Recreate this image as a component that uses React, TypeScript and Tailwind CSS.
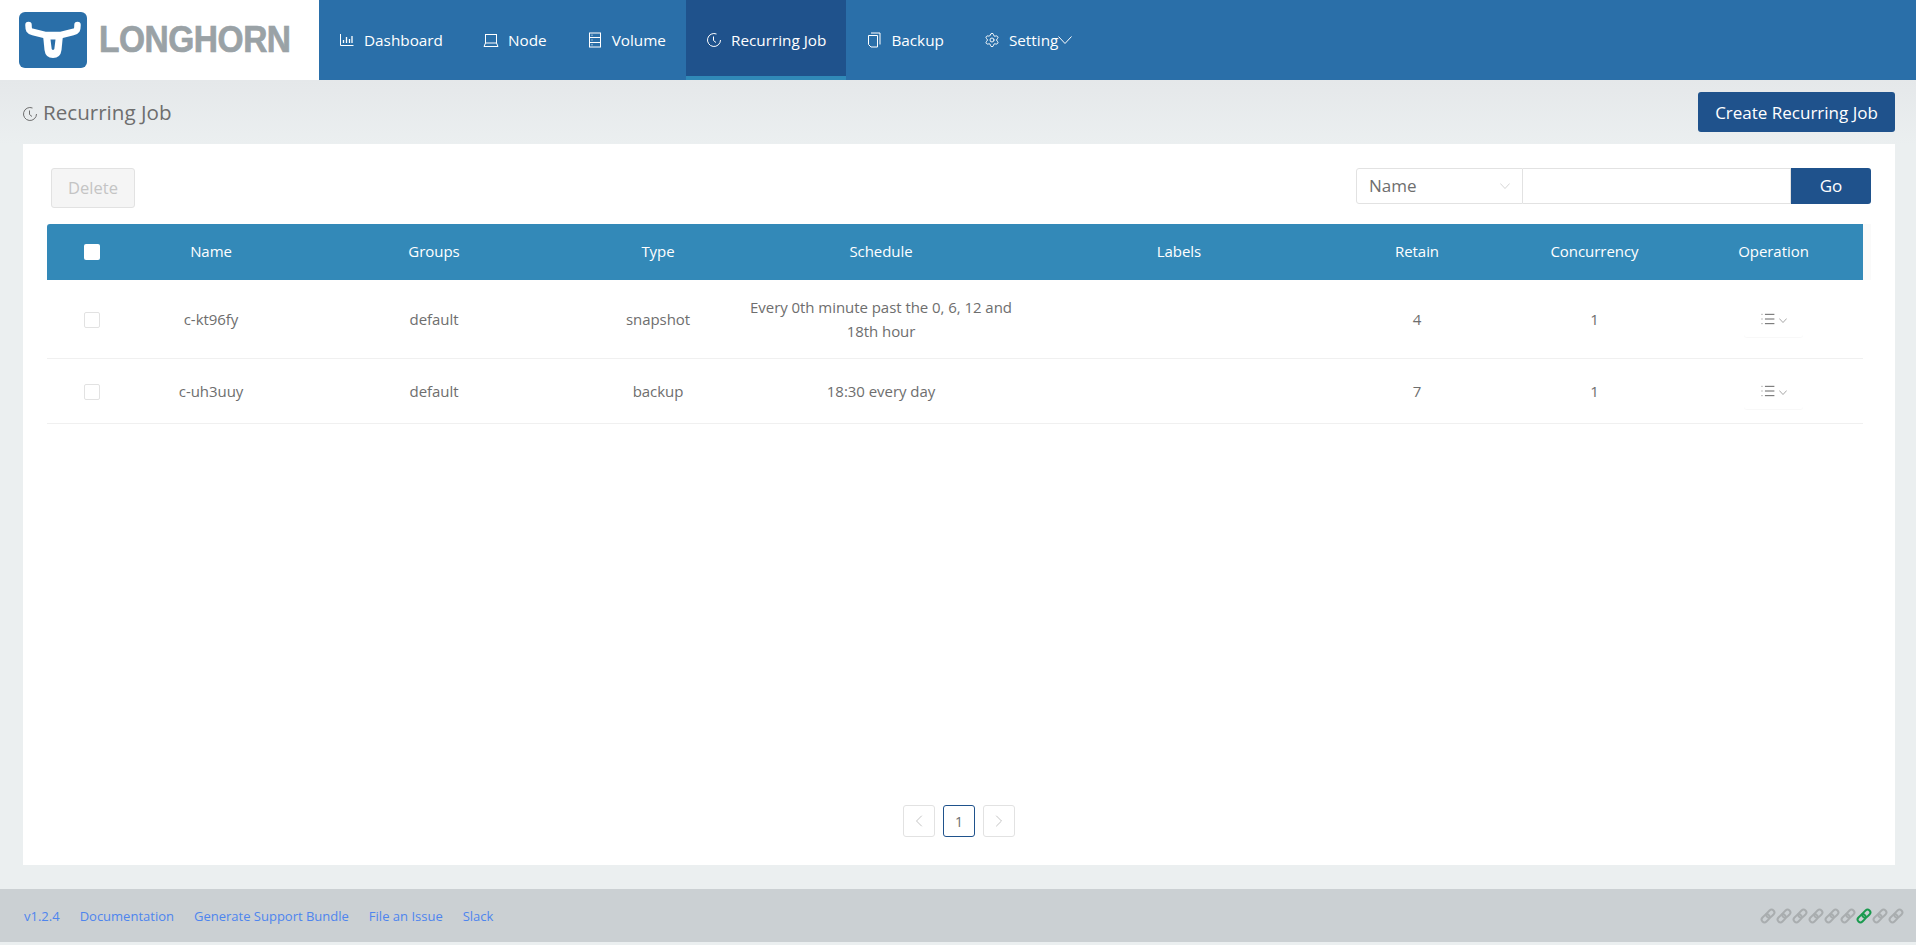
import React from 'react';
import { ChevronLeft, ChevronRight, List, Settings } from 'lucide-react';

const font = '"Open Sans", "Noto Sans", sans-serif';

const BarIcon = () => (
  <svg viewBox="0 0 16 16" className="h-4 w-4" fill="none" stroke="currentColor" strokeWidth="1">
    <path d="M1.500 2v11.500h13" />
    <path d="M4.500 11V8M7.500 11V5M10.500 11V7M13 11V4" strokeWidth="1.300" />
  </svg>
);

const LaptopIcon = () => (
  <svg viewBox="0 0 16 16" className="h-4 w-4" fill="none" stroke="currentColor" strokeWidth="1">
    <rect x="2.500" y="2.500" width="11" height="8.500" />
    <path d="M1 14.500h14M2.500 11 1 14.500M13.500 11l1.500 3.500" />
  </svg>
);

const DatabaseIcon = () => (
  <svg viewBox="0 0 16 16" className="h-4 w-4" fill="none" stroke="currentColor" strokeWidth="1">
    <rect x="2.500" y="1" width="11" height="14" />
    <path d="M2.500 5.500h11M2.500 10.500h11M4.500 3.200h1M4.500 8h1M4.500 12.800h1" />
  </svg>
);

const ClockIcon = ({ className = 'h-4 w-4' }: { className?: string }) => (
  <svg viewBox="0 0 16 16" className={className} fill="none" stroke="currentColor" strokeWidth="1">
    <path d="M10.500 2A6.500 6.500 0 1 0 14.500 8" />
    <path d="M7.500 4.500v4l2.500 2" />
  </svg>
);

const CopyIcon = () => (
  <svg viewBox="0 0 16 16" className="h-4 w-4" fill="none" stroke="currentColor" strokeWidth="1">
    <path d="M5 1h9v11.500" />
    <path d="M2.500 3.500h9v11.500h-6.500l-2.500-2.500z" />
  </svg>
);

const Caret = ({ className }: { className: string }) => (
  <svg viewBox="0 0 14 8" className={className} fill="none" stroke="currentColor" strokeWidth="1">
    <path d="M.5.500 7 7.500 13.500.500" />
  </svg>
);

const ChainIcon = ({ color }: { color: string }) => (
  <svg viewBox="0 0 16 16" className="h-4 w-4" fill="none" stroke={color} strokeWidth="2">
    <rect x="-1" y="-2.800" width="9" height="5.600" rx="2.800" transform="translate(3.200 12.800) rotate(-45)" />
    <rect x="-8" y="-2.800" width="9" height="5.600" rx="2.800" transform="translate(12.800 3.200) rotate(-45)" />
  </svg>
);

const navItems = [
  { label: 'Dashboard', icon: <BarIcon /> },
  { label: 'Node', icon: <LaptopIcon /> },
  { label: 'Volume', icon: <DatabaseIcon /> },
  { label: 'Recurring Job', icon: <ClockIcon />, active: true },
  { label: 'Backup', icon: <CopyIcon /> },
  { label: 'Setting', icon: <Settings className="h-4 w-4" strokeWidth={1.4} />, caret: true },
];

const jobs = [
  { name: 'c-kt96fy', groups: 'default', type: 'snapshot', schedule: 'Every 0th minute past the 0, 6, 12 and 18th hour', retain: 4, concurrency: 1, height: 'h-[79px]' },
  { name: 'c-uh3uuy', groups: 'default', type: 'backup', schedule: '18:30 every day', retain: 7, concurrency: 1, height: 'h-[65px]' },
];

const columns = 'grid grid-cols-[90px_148px_298px_150px_296px_300px_176px_179px_179px] items-center text-center tracking-[-0.05px]';

const App: React.FC = () => {
  return (
    <div className="flex h-[945px] flex-col overflow-hidden bg-[#ebeff0] text-[15px] text-[#6e6e6e]" style={{ fontFamily: font }}>
      {/* Header */}
      <div className="flex h-20 bg-[#2a6fa9] text-white">
        <div className="flex w-[319px] items-center bg-white pl-[19px]">
          <svg viewBox="0 0 68 56" className="h-14 w-[68px]">
            <rect width="68" height="56" rx="6" fill="#2a6fa9" />
            <path d="M9.500 13C9.500 18 10 19 14 20L26 23H42L54 20C58 19 58.500 18 58.500 13" fill="none" stroke="#fff" strokeWidth="6.500" strokeLinecap="round" strokeLinejoin="round" />
            <path d="M24 23H44L42.500 38Q41.500 46 34 46Q26.500 46 25.500 38Z" fill="#fff" />
            <path d="M31.500 27.500H36.500L35.300 37Q34 39 32.700 37Z" fill="#2a6fa9" />
          </svg>
          <span className="ml-3 origin-left scale-x-[0.93] text-[36px] font-bold leading-none tracking-[-0.5px] text-[#9aa2a6]" style={{ fontFamily: '"Liberation Sans", sans-serif', WebkitTextStroke: '0.7px #9aa2a6' }}>
            LONGHORN
          </span>
        </div>
        {navItems.map((item) => (
          <div
            key={item.label}
            className={`flex items-center gap-[9px] px-5 ${item.active ? 'border-b-4 border-[#3089b8] bg-[#1f528c] pt-1' : ''}`}
          >
            {item.icon}
            <span className="text-[15.300px]">{item.label}</span>
            {item.caret && <Caret className="-ml-[9px] h-2 w-3.5" />}
          </div>
        ))}
      </div>

      {/* Title */}
      <div className="flex h-16 items-center justify-between bg-gradient-to-b from-[#e5e8ea] to-[#ebeff0] pl-[22px] pr-[21px]">
        <div className="flex items-center gap-[5px] text-[20.600px] text-[#6e6e6e]">
          <ClockIcon className="mt-1 h-4 w-4" />
          <span>Recurring Job</span>
        </div>
        <button className="h-10 w-[197px] rounded-[3px] bg-[#1f528c] pt-0.5 text-[17px] text-white">Create Recurring Job</button>
      </div>

      {/* Panel */}
      <div className="ml-[23px] mr-[21px] flex h-[721px] flex-col bg-white px-6 pt-6">
        <div className="flex items-start justify-between">
          <button className="ml-1 h-10 w-[84px] rounded-[3px] border border-[#e2e2e2] bg-[#f5f5f5] text-[16.500px] text-[#c4c4c4]">Delete</button>
          <div className="flex h-9 items-stretch">
            <div className="flex w-[167px] items-center justify-between rounded-l-[3px] border border-[#e2e2e2] pl-3 pr-3 text-[17px]">
              <span>Name</span>
              <Caret className="h-1.5 w-2.5 text-[#c4c4c4]" />
            </div>
            <div className="w-[268px] border-y border-r border-[#e2e2e2]" />
            <button className="w-20 rounded-r-[3px] bg-[#1f528c] text-[17px] text-white">Go</button>
          </div>
        </div>

        {/* Table */}
        <div className="mt-4 bg-[#fafafa]">
          <div className={`${columns} h-14 w-[1816px] rounded-tl-[3px] bg-[#3389b8] pb-0.5 text-white`}>
            <div className="flex justify-center pt-0.5">
              <span className="h-4 w-4 rounded-[2px] bg-white" />
            </div>
            <div>Name</div>
            <div>Groups</div>
            <div>Type</div>
            <div>Schedule</div>
            <div>Labels</div>
            <div>Retain</div>
            <div>Concurrency</div>
            <div>Operation</div>
          </div>
        </div>
        {jobs.map((job) => (
          <div key={job.name} className={`${columns} ${job.height} w-[1816px] border-b border-[#f0f0f0]`}>
            <div className="flex justify-center pt-0.5">
              <span className="h-4 w-4 rounded-[2px] border border-[#e2e2e2]" />
            </div>
            <div>{job.name}</div>
            <div>{job.groups}</div>
            <div>{job.type}</div>
            <div className="px-4 leading-[24px]">{job.schedule}</div>
            <div />
            <div>{job.retain}</div>
            <div>{job.concurrency}</div>
            <div className="flex justify-center">
              <div className="flex h-9 w-[59px] items-center justify-center gap-[3px] rounded-[3px] text-[#666] shadow-[0_1px_1px_rgba(0,0,0,0.03)]">
                <List className="h-4 w-4" strokeWidth={1.5} />
                <Caret className="mt-0.5 h-[5px] w-2" />
              </div>
            </div>
          </div>
        ))}

        {/* Pagination */}
        <div className="mb-7 mt-auto flex justify-center gap-2">
          <div className="flex h-8 w-8 items-center justify-center rounded-[3px] border border-[#e2e2e2] text-[#c4c4c4]">
            <ChevronLeft className="h-5 w-5" strokeWidth={1.2} />
          </div>
          <div className="flex h-8 w-8 items-center justify-center rounded-[3px] border border-[#1f528c] text-[14px]">1</div>
          <div className="flex h-8 w-8 items-center justify-center rounded-[3px] border border-[#e2e2e2] text-[#c4c4c4]">
            <ChevronRight className="h-5 w-5" strokeWidth={1.2} />
          </div>
        </div>
      </div>

      {/* Footer */}
      <div className="mt-6 flex h-[53px] items-center justify-between bg-[#cbd0d3] pl-6 pr-3 text-[13px] text-[#4e85ee]">
        <div className="flex gap-5 pt-0.5">
          <span>v1.2.4</span>
          <span>Documentation</span>
          <span>Generate Support Bundle</span>
          <span>File an Issue</span>
          <span>Slack</span>
        </div>
        <div className="flex">
          {[0, 1, 2, 3, 4, 5, 6, 7, 8].map((i) => (
            <ChainIcon key={i} color={i === 6 ? '#1a9a4e' : '#a9adaf'} />
          ))}
        </div>
      </div>
    </div>
  );
};

export default App;
